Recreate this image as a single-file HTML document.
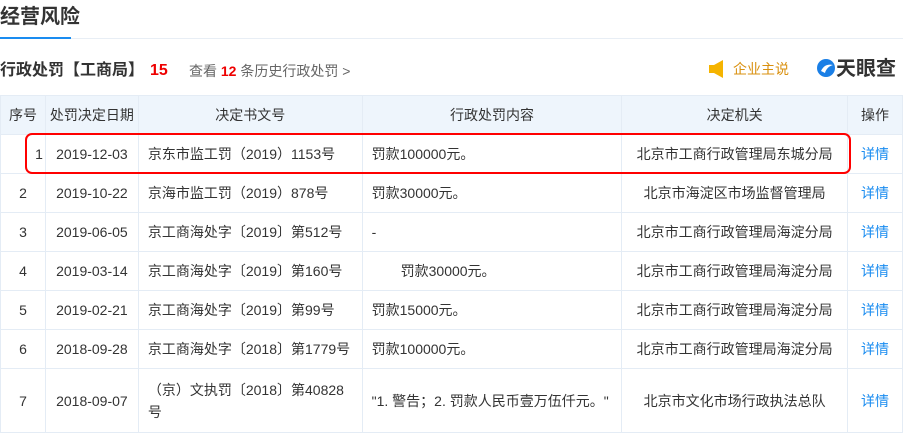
<!DOCTYPE html>
<html><head><meta charset="utf-8"><style>
*{margin:0;padding:0;box-sizing:border-box}
body{width:903px;height:410px;overflow:hidden;background:#fff;font-family:"Liberation Sans","Noto Sans CJK SC",sans-serif;color:#333;position:relative}
.t{position:absolute;left:0;top:2px;font-size:20px;font-weight:bold;color:#333;line-height:30px}
.ul{position:absolute;left:0;top:37px;width:71px;height:2px;background:#1a8cf0}
.hl{position:absolute;left:71px;top:38px;right:0;height:1px;background:#e8eef5}
.sub{position:absolute;left:0;top:59px;font-size:16px;line-height:24px;font-weight:bold}
.sub b{color:#e00;margin-left:6px}
.h{position:absolute;left:189px;top:61px;font-size:14px;color:#666;line-height:20px}
.h b{color:#e00}
.qy{position:absolute;left:709px;top:58px;font-size:14px;color:#d9900f;line-height:22px}
.logo{position:absolute;left:816px;top:56px;font-size:20px;font-weight:bold;color:#333;line-height:26px}
table{position:absolute;left:0;top:95px;border-collapse:collapse;font-size:14px;table-layout:fixed}
td,th{border:1px solid #e4ecf5;height:39px;text-align:center;font-weight:normal;line-height:18px}
th{background:#eef5fc;color:#333}
td.l{text-align:left;padding-left:9px}
td.r{text-align:right;padding-right:2px}
a{color:#1a8cf0}
.box{position:absolute;left:25px;top:133px;width:826px;height:41px;border:2px solid #f00;border-radius:7px}
</style></head><body>
<div class="t">经营风险</div><div class="ul"></div><div class="hl"></div>
<div class="sub">行政处罚【工商局】<b>15</b></div>
<div class="h">查看 <b>12</b> 条历史行政处罚 &gt;</div>
<div class="qy"><svg width="18" height="20" viewBox="0 0 18 20" style="vertical-align:-5px;margin-right:6px"><rect x="0" y="6" width="5" height="8" fill="#f5b400"/><path d="M5 6L14 1V19L5 14Z" fill="#f5b400"/></svg>企业主说</div>
<div class="logo"><svg width="20" height="20" viewBox="0 0 20 20" style="vertical-align:-3px"><circle cx="10" cy="10" r="9" fill="#1a7fe6"/><path d="M5 13C8 7 12 6 17 7C13 8 10 11 9 15Z" fill="#fff"/></svg>天眼查</div>
<table>
<colgroup><col width="45"><col width="93"><col width="224"><col width="260"><col width="226"><col width="55"></colgroup>
<tr><th>序号</th><th>处罚决定日期</th><th>决定书文号</th><th>行政处罚内容</th><th>决定机关</th><th>操作</th></tr>
<tr><td class="r">1</td><td>2019-12-03</td><td class="l">京东市监工罚（2019）1153号</td><td class="l">罚款100000元。</td><td>北京市工商行政管理局东城分局</td><td><a>详情</a></td></tr>
<tr><td>2</td><td>2019-10-22</td><td class="l">京海市监工罚（2019）878号</td><td class="l">罚款30000元。</td><td>北京市海淀区市场监督管理局</td><td><a>详情</a></td></tr>
<tr><td>3</td><td>2019-06-05</td><td class="l">京工商海处字〔2019〕第512号</td><td class="l">-</td><td>北京市工商行政管理局海淀分局</td><td><a>详情</a></td></tr>
<tr><td>4</td><td>2019-03-14</td><td class="l">京工商海处字〔2019〕第160号</td><td class="l" style="padding-left:38px">罚款30000元。</td><td>北京市工商行政管理局海淀分局</td><td><a>详情</a></td></tr>
<tr><td>5</td><td>2019-02-21</td><td class="l">京工商海处字〔2019〕第99号</td><td class="l">罚款15000元。</td><td>北京市工商行政管理局海淀分局</td><td><a>详情</a></td></tr>
<tr><td>6</td><td>2018-09-28</td><td class="l">京工商海处字〔2018〕第1779号</td><td class="l">罚款100000元。</td><td>北京市工商行政管理局海淀分局</td><td><a>详情</a></td></tr>
<tr><td style="height:64px">7</td><td>2018-09-07</td><td class="l" style="padding-top:10px;vertical-align:top;line-height:22px">（京）文执罚〔2018〕第40828<br>号</td><td class="l">"1. 警告；2. 罚款人民币壹万伍仟元。"</td><td>北京市文化市场行政执法总队</td><td><a>详情</a></td></tr>
</table>
<div class="box"></div>
</body></html>
